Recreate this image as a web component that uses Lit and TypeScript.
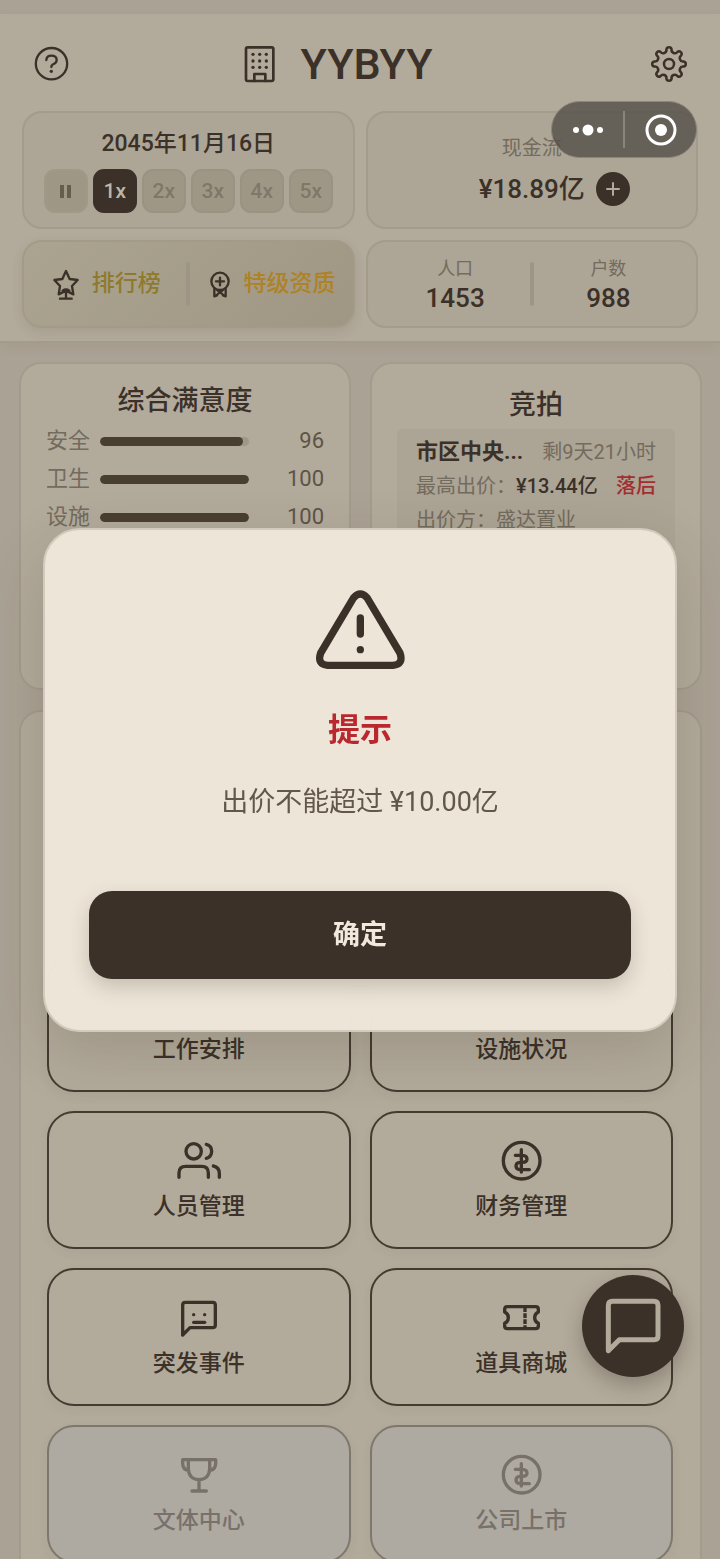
import { LitElement, html, css, svg } from "lit";
import { customElement, state } from "lit/decorators.js";
import { classMap } from "lit/directives/class-map.js";

/** Outline of the eight-lobed settings gear, centred on the origin. */
const gearPath = (() => {
  const at = (deg: number) => {
    const a = (deg * Math.PI) / 180;
    return `${(14.8 * Math.cos(a)).toFixed(2)} ${(14.8 * Math.sin(a)).toFixed(2)}`;
  };
  let d = `M${at(-10)}`;
  for (let i = 0; i < 8; i++) {
    d += `A2.6 2.6 0 0 1 ${at(i * 45 + 10)}A3.3 3.3 0 0 0 ${at(i * 45 + 35)}`;
  }
  return d + "Z";
})();

const icon = (w: number, h: number, box: string, stroke: number, body: unknown) => html`<svg
  class="icon" width=${w} height=${h} viewBox=${box} stroke-width=${stroke} aria-hidden="true">${body}</svg>`;

const icons = {
  help: () => icon(37, 37, "99 135 111 111", 7, svg`
    <circle cx="154.5" cy="191" r="47"/>
    <path d="M139 180q1-13 15-13q16 0 16 13q0 8-9 12q-7 3-7 9"/>
    <circle class="dot" cx="154" cy="214" r="5"/>`),
  building: () => icon(33, 40, "726 132 99 120", 8, svg`
    <rect x="735" y="142" width="82" height="101" rx="5"/>
    <path d="M760 243v-21h33v21"/>
    ${[163, 183, 202].map((y) => [756, 776, 796].map((x) => svg`<circle class="dot" cx=${x} cy=${y} r="5"/>`))}`),
  gear: () => icon(38, 38, "-19 -19 38 38", 2.5, svg`
    <path transform="rotate(-90)" d=${gearPath}/><circle r="5"/>`),
  star: () => icon(28, 33, "156 114 84 99", 7, svg`
    <path d="M198 123l11 24 24 3-17 18 4 25-22-11-22 11 4-25-17-18 24-3z"/>
    <path d="M188 182q10-7 20 0M198 181v24M180 206h35"/>`),
  medal: () => icon(22, 29, "631 118 66 87", 7, svg`
    <circle cx="664" cy="152" r="26"/>
    <path d="M664 141v23M652 152h24M647 175v22l8-3M681 175v22l-8-3M651 196l13-12 13 12M655 178l9 8 9-8"/>`),
  users: () => icon(48, 40, "525 810 144 120", 10, svg`
    <circle cx="581" cy="841" r="23"/>
    <path d="M619 820q16 4 16 21t-16 21M537 919v-13q0-20 20-20h48q20 0 20 20v13M640 885q18 4 18 22v12"/>`),
  coin: () => icon(43, 43, "420 804 129 129", 10, svg`
    <circle cx="485" cy="869" r="55"/>
    <path d="M484 836v67M466 853h21q14 1 14 11t-14 10h-7q-12 1-12 11t12 11h28"/>`),
  event: () => icon(40, 40, "537 168 120 120", 10, svg`
    <path d="M548 279V189q0-8 8-8h82q8 0 8 8v60q0 8-8 8h-68z"/>
    <path d="M581 241h33"/>
    <circle class="dot" cx="581" cy="218" r="5"/><circle class="dot" cx="614" cy="218" r="5"/>`),
  ticket: () => icon(41, 29, "423 186 123 87", 10, svg`
    <path d="M442 197h85q8 0 8 8v8q-11 5-11 17t11 17v8q0 8-8 8h-85q-8 0-8-8v-8q11-5 11-17t-11-17v-8q0-8 8-8z"/>
    <path class="butt" d="M495 199v64" stroke-dasharray="14 4 14 4"/>`),
  trophy: () => icon(40, 40, "537 642 120 120", 10, svg`
    <path d="M548 656h99M565 656v28q2 31 32 32q30-1 32-32v-28M548 656v12q1 18 17 20M647 656v12q-1 18-17 20M597 718v30M576 750h43"/>`),
  chat: () => icon(58, 58, "732 171 174 174", 15, svg`
    <path d="M745 332V196q0-12 12-12h125q12 0 12 12v91q0 12-12 12h-104z"/>`),
  alert: () => icon(94, 84, "939 201 282 252", 22, svg`
    <path d="M1061 230Q1081 208 1101 230L1200 396Q1212 430 1179 433H983Q950 430 962 396Z"/>
    <path d="M1081 291v48"/><circle class="dot" cx="1081" cy="386" r="11"/>`),
  none: () => html``,
};

type IconName = keyof typeof icons;
interface Tile { label: string; icon: IconName; disabled?: boolean }

@customElement("app-root")
export class AppRoot extends LitElement {
  @state() private speed = 1;
  @state() private open = true;

  private meters = [
    { label: "安全", value: 96 },
    { label: "卫生", value: 100 },
    { label: "设施", value: 100 },
  ];

  private tiles: Tile[] = [
    { label: "工作安排", icon: "none" },
    { label: "设施状况", icon: "none" },
    { label: "人员管理", icon: "users" },
    { label: "财务管理", icon: "coin" },
    { label: "突发事件", icon: "event" },
    { label: "道具商城", icon: "ticket" },
    { label: "文体中心", icon: "trophy", disabled: true },
    { label: "公司上市", icon: "coin", disabled: true },
  ];

  static styles = css`
    :host {
      --ink: #3b3128;
      --mid: #5d5447;
      --soft: #736b5d;
      --page: #aaa294;
      --panel: #b2aa9b;
      --inset: #ada595;
      --line: #a39b8b;
      display: block;
      position: relative;
      height: 100vh;
      overflow: hidden;
      box-sizing: border-box;
      padding-top: 14px;
      background: var(--page);
      color: var(--ink);
      font-family: Roboto, "Noto Sans CJK SC", sans-serif;
      font-size: 20px;
      line-height: 34px;
    }
    * { box-sizing: border-box; }
    button { font: inherit; color: inherit; border: 0; background: none; padding: 0; margin: 0; }
    h1, h2, p { margin: 0; }
    .icon { display: block; flex: none; fill: none; stroke: currentColor; stroke-linecap: round; stroke-linejoin: round; }
    .icon .dot { fill: currentColor; stroke: none; }
    .icon .butt { stroke-linecap: butt; }

    .head { background: var(--panel); border-bottom: 2px solid var(--line); padding: 0 22px 13px; box-shadow: 0 4px 12px rgba(60, 50, 35, 0.06); }
    .bar { display: grid; grid-template-columns: 1fr auto 1fr; align-items: center; height: 97px; padding: 2px 10px 0 11px; }
    .bar button:last-child { justify-self: end; }
    .bar button:first-child { justify-self: start; }
    .brand { display: flex; align-items: center; gap: 25px; padding-right: 46px; }
    h1 { font-size: 43px; line-height: 48px; font-weight: 500; }
    .stats { display: grid; grid-template-columns: 1fr 1fr; gap: 11px; }
    .stat { border: 2px solid var(--line); border-radius: 20px; background: var(--inset); }
    .time { padding: 14px 0; display: grid; gap: 9px; justify-items: center; }
    .date { font-size: 23px; line-height: 33px; font-weight: 500; }
    .speeds { display: flex; gap: 5px; }
    .speed { width: 44px; height: 44px; border-radius: 11px; border: 2px solid #9a9282; background: #9f9786; color: #7f7768; font-size: 21px; font-weight: 500; display: grid; place-items: center; }
    .speed.pause { border-color: #a19988; color: #665d4f; }
    .speed.on { background: var(--ink); border-color: var(--ink); color: #bdb5a6; }
    .pauseglyph { width: 11px; height: 13px; border: solid currentColor; border-width: 0 4px; }
    .cash { padding-top: 18px; text-align: center; color: var(--soft); }
    .money { display: grid; grid-template-columns: 1fr auto 1fr; align-items: center; column-gap: 11px; padding-top: 7px; color: var(--ink); font-size: 26px; font-weight: 500; }
    .plus { grid-column: 3; width: 34px; height: 34px; border-radius: 50%; background: var(--ink); color: #b2aa9b; display: grid; place-items: center; }
    .amount { grid-column: 2; }
    .split { display: grid; grid-template-columns: 1fr auto 1fr; align-items: center; height: 88px; }
    .rank { background: linear-gradient(135deg, #aba491, #9f9783); box-shadow: 0 4px 12px rgba(60, 50, 35, 0.1); font-size: 23px; font-weight: 500; border-color: #a39b87; }
    .rank button { display: flex; justify-content: center; align-items: center; gap: 12px; padding-left: 2px; }
    .gold { color: #8f7a2c; }
    .amber { color: #ae8226; }
    .rule { width: 4px; height: 44px; border-radius: 2px; background: #9d9586; }
    .people { padding: 0 13px; text-align: center; }
    .people dl, .people dt, .people dd { margin: 0; }
    .people dt { font-size: 18px; line-height: 28px; color: var(--soft); }
    .people dd { font-size: 26px; line-height: 30px; font-weight: 500; }

    .main { padding: 19px 18px 19px 19px; display: grid; gap: 20px; }
    .cards { display: grid; grid-template-columns: 1fr 1fr; gap: 19px; }
    .card { background: var(--panel); border: 2px solid var(--line); border-radius: 22px; }
    .top { min-height: 328px; padding: 18px 25px; }
    h2 { font-size: 27px; line-height: 38px; font-weight: 500; text-align: center; }
    .meters { padding-top: 2px; font-size: 22px; color: var(--soft); }
    .meter { display: grid; grid-template-columns: 44px 1fr 65px; align-items: center; gap: 10px; line-height: 38px; }
    .track { height: 9px; border-radius: 5px; background: #9f9789; overflow: hidden; }
    .fill { height: 100%; border-radius: 5px; background: #493f30; }
    .num { text-align: right; color: var(--mid); }
    .auction { padding-top: 22px; }
    .lot { margin-top: 5px; padding: 6px 19px; min-height: 170px; background: #aca494; border-radius: 6px; color: var(--soft); }
    .line { display: flex; justify-content: space-between; white-space: nowrap; }
    .line strong { color: var(--ink); font-weight: 500; }
    .line .name { font-size: 22px; font-weight: 700; }
    .behind { color: #a32e30; font-weight: 500; }

    .menu { padding: 242px 27px 20px 26px; }
    .tiles { display: grid; grid-template-columns: 1fr 1fr; gap: 19px; }
    .tile { height: 138px; border: 2px solid #443a2f; border-radius: 27px; display: flex; flex-direction: column; align-items: center; justify-content: center; gap: 9px; font-size: 23px; line-height: 30px; font-weight: 500; box-shadow: 0 4px 12px rgba(60, 50, 35, 0.05); }
    .tile:disabled { background: #aea9a1; border-color: #7e776d; color: #78716a; }
    .slot { height: 44px; display: grid; place-items: center; }

    .capsule { position: absolute; top: 101px; right: 23px; width: 146px; height: 57px; border-radius: 29px; border: 1px solid #8b857a; background: rgba(86, 81, 75, 0.82); color: #fff; display: grid; grid-template-columns: 1fr 2px 1fr; align-items: center; justify-items: center; }
    .capsule i { width: 2px; height: 37px; background: #8a857c; }
    .fab { position: absolute; right: 36px; bottom: 182px; width: 102px; height: 102px; border-radius: 50%; background: var(--ink); color: #b2aa9b; display: grid; place-items: center; box-shadow: 0 8px 20px rgba(40, 32, 22, 0.28); }
    .scrim { position: absolute; inset: 0; display: grid; place-items: center; }
    .dialog { width: 88%; padding: 58px 44px 51px; border-radius: 37px; border: 2px solid #d2cabc; background: rgba(238, 231, 218, 0.97); backdrop-filter: blur(12px); box-shadow: 0 20px 60px rgba(50, 40, 25, 0.16); display: flex; flex-direction: column; align-items: center; text-align: center; }
    .dialog h2 { margin-top: 34px; font-size: 32px; line-height: 48px; font-weight: 700; color: #b9282e; }
    .dialog p { margin-top: 28px; font-size: 27px; line-height: 40px; color: #62584a; }
    .ok { margin-top: 69px; width: 100%; height: 88px; border-radius: 23px; background: var(--ink); color: #f0e9dc; font-size: 27px; font-weight: 700; box-shadow: 0 8px 20px rgba(60, 50, 35, 0.22); }
  `;

  render() {
    return html`
      <header class="head">
        <div class="bar">
          <button aria-label="帮助">${icons.help()}</button>
          <div class="brand">${icons.building()}<h1>YYBYY</h1></div>
          <button aria-label="设置">${icons.gear()}</button>
        </div>
        <div class="stats">
          <div class="stat time">
            <div class="date">2045年11月16日</div>
            <div class="speeds">
              <button class="speed pause" aria-label="暂停"><span class="pauseglyph"></span></button>
              ${[1, 2, 3, 4, 5].map((n) => html`<button
                class=${classMap({ speed: true, on: n === this.speed })}
                @click=${() => (this.speed = n)}>${n}x</button>`)}
            </div>
          </div>
          <div class="stat cash">
            <div>现金流</div>
            <div class="money">
              <span class="amount">¥18.89亿</span>
              <button class="plus" aria-label="充值">${icon(14, 14, "0 0 14 14", 2, svg`<path d="M7 1v12M1 7h12"/>`)}</button>
            </div>
          </div>
          <div class="stat split rank">
            <button>${icons.star()}<span class="gold">排行榜</span></button>
            <span class="rule"></span>
            <button>${icons.medal()}<span class="amber">特级资质</span></button>
          </div>
          <div class="stat split people">
            <dl><dt>人口</dt><dd>1453</dd></dl>
            <span class="rule"></span>
            <dl><dt>户数</dt><dd>988</dd></dl>
          </div>
        </div>
      </header>

      <main class="main">
        <div class="cards">
          <section class="card top">
            <h2>综合满意度</h2>
            <div class="meters">
              ${this.meters.map((m) => html`<div class="meter">
                <span>${m.label}</span>
                <div class="track"><div class="fill" style="width:${m.value}%"></div></div>
                <span class="num">${m.value}</span>
              </div>`)}
            </div>
          </section>
          <section class="card top auction">
            <h2>竞拍</h2>
            <div class="lot">
              <div class="line"><strong class="name">市区中央...</strong><span>剩9天21小时</span></div>
              <div class="line"><span>最高出价：<strong>¥13.44亿</strong></span><span class="behind">落后</span></div>
              <div class="line"><span>出价方：盛达置业</span></div>
            </div>
          </section>
        </div>
        <section class="card menu">
          <div class="tiles">
            ${this.tiles.map((t) => html`<button class="tile" ?disabled=${t.disabled}>
              <span class="slot">${icons[t.icon]()}</span><span>${t.label}</span>
            </button>`)}
          </div>
        </section>
      </main>

      <button class="fab" aria-label="聊天">${icons.chat()}</button>
      ${this.open
        ? html`<div class="scrim">
            <div class="dialog" role="alertdialog" aria-labelledby="t" aria-describedby="m">
              ${icons.alert()}
              <h2 id="t">提示</h2>
              <p id="m">出价不能超过 ¥10.00亿</p>
              <button class="ok" @click=${() => (this.open = false)}>确定</button>
            </div>
          </div>`
        : null}
      <div class="capsule">
        ${icon(32, 12, "0 0 32 12", 0, svg`<circle class="dot" cx="4" cy="6" r="3"/><circle class="dot" cx="16" cy="6" r="5.5"/><circle class="dot" cx="28" cy="6" r="3"/>`)}
        <i></i>
        ${icon(32, 32, "0 0 32 32", 3, svg`<circle cx="16" cy="16" r="14"/><circle class="dot" cx="16" cy="16" r="6"/>`)}
      </div>
    `;
  }
}
